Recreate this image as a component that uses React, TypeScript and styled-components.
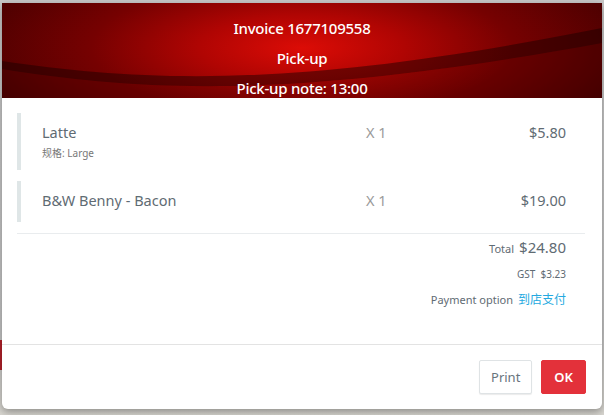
import React from "react";
import styled, { createGlobalStyle } from "styled-components";

const Global = createGlobalStyle`
  html, body { margin: 0; padding: 0; }
  body {
    width: 604px; height: 415px; overflow: hidden;
    background: linear-gradient(180deg, #c9c9c9 0%, #c4c4c4 80%, #d9d7d1 100%);
    font-family: "Noto Sans", "Open Sans", "Noto Sans CJK SC", sans-serif;
  }
`;

const Backdrop = styled.div`
  width: 604px;
  height: 415px;
  padding: 3px 2px 0 2px;
  box-sizing: border-box;
  position: relative;
`;

const SideStrip = styled.div`
  position: absolute;
  left: 0;
  top: 340px;
  width: 2px;
  height: 30px;
  background: #b3202a;
`;

const Modal = styled.div`
  width: 600px;
  height: 406px;
  background: #fff;
  border-radius: 0 0 6px 6px;
  box-shadow: 0 3px 8px rgba(0, 0, 0, 0.35);
  display: flex;
  flex-direction: column;
  overflow: hidden;
  position: relative;
`;

const Header = styled.div`
  position: relative;
  height: 95px;
  display: flex;
  flex-direction: column;
  align-items: center;
  background: radial-gradient(ellipse 340px 110px at 300px 45px, #dc0c06 0%, #b00503 30%, #760101 62%, #4a0000 100%);
  color: #fff;
  overflow: hidden;
`;

const Swoosh = styled.svg`
  position: absolute;
  inset: 0;
  width: 600px;
  height: 95px;
`;

const HeaderLine = styled.div`
  position: relative;
  font-size: 15px;
  font-weight: 500;
  height: 30px;
  line-height: 30px;
  letter-spacing: -0.25px;
  &:first-of-type { margin-top: 10px; }
`;

const Body = styled.div`
  flex: 1;
  padding: 15px 17px 0 15px;
  display: flex;
  flex-direction: column;
`;

const Item = styled.div<{ $h: number }>`
  display: grid;
  grid-template-columns: 1fr 86px 114px;
  align-items: start;
  height: ${(p) => p.$h}px;
  border-left: 4px solid #dfe6e7;
  padding: 9px 19px 0 21px;
  box-sizing: border-box;
  margin-bottom: 11px;
  color: #5f6b73;
`;

const Name = styled.div`
  font-size: 14.5px;
  line-height: 20px;
`;

const Spec = styled.div`
  font-size: 10px;
  color: #777;
  margin-top: 3px;
`;

const Qty = styled.div`
  font-size: 14.5px;
  line-height: 20px;
  color: #9a9a9a;
`;

const Price = styled.div`
  font-size: 14.5px;
  line-height: 20px;
  text-align: right;
`;

const Divider = styled.div`
  height: 1px;
  background: #e9ecee;
`;

const SummaryRow = styled.div<{ $mt: number }>`
  display: flex;
  justify-content: flex-end;
  align-items: baseline;
  gap: 5px;
  padding-right: 19px;
  margin-top: ${(p) => p.$mt}px;
  color: #5f6b73;
`;

const Small = styled.span<{ $size: number }>`
  font-size: ${(p) => p.$size}px;
`;

const Link = styled.span`
  font-size: 12px;
  color: #25a9e0;
  font-family: "Noto Sans CJK SC", sans-serif;
`;

const Footer = styled.div`
  border-top: 1px solid #e3e3e3;
  height: 65px;
  display: flex;
  justify-content: flex-end;
  align-items: flex-start;
  padding: 15px 16px 0 0;
  gap: 9px;
  box-sizing: border-box;
`;

const Button = styled.button<{ $primary?: boolean }>`
  height: 34px;
  padding: 0 ${(p) => (p.$primary ? 12 : 11)}px;
  border-radius: 2px;
  font-family: inherit;
  font-size: 13px;
  cursor: pointer;
  border: 1px solid ${(p) => (p.$primary ? "#e3313a" : "#dfe3e5")};
  background: ${(p) => (p.$primary ? "#e3313a" : "#fff")};
  color: ${(p) => (p.$primary ? "#fff" : "#68747c")};
  font-weight: ${(p) => (p.$primary ? 600 : 400)};
  box-shadow: ${(p) => (p.$primary ? "none" : "0 1px 1px rgba(0,0,0,0.08)")};
`;

export default function App() {
  return (
    <>
      <Global />
      <Backdrop>
        <SideStrip />
        <Modal>
          <Header>
            <Swoosh viewBox="0 0 600 95" preserveAspectRatio="none">
              <path d="M0 58 C 150 80, 300 85, 600 25 L600 40 C 300 95, 150 90, 0 66 Z" fill="rgba(20,0,0,0.45)" />
              <path d="M0 66 C 150 90, 300 95, 600 40 L600 95 L0 95 Z" fill="rgba(40,0,0,0.18)" />
            </Swoosh>
            <HeaderLine>Invoice 1677109558</HeaderLine>
            <HeaderLine>Pick-up</HeaderLine>
            <HeaderLine>Pick-up note: 13:00</HeaderLine>
          </Header>
          <Body>
            <Item $h={57}>
              <div>
                <Name>Latte</Name>
                <Spec>规格: Large</Spec>
              </div>
              <Qty>X 1</Qty>
              <Price>$5.80</Price>
            </Item>
            <Item $h={41}>
              <Name>B&amp;W Benny - Bacon</Name>
              <Qty>X 1</Qty>
              <Price>$19.00</Price>
            </Item>
            <Divider />
            <SummaryRow $mt={3}>
              <Small $size={11}>Total</Small>
              <Small $size={15}>$24.80</Small>
            </SummaryRow>
            <SummaryRow $mt={10}>
              <Small $size={10}>GST</Small>
              <Small $size={10}>$3.23</Small>
            </SummaryRow>
            <SummaryRow $mt={9}>
              <Small $size={11}>Payment option</Small>
              <Link>到店支付</Link>
            </SummaryRow>
          </Body>
          <Footer>
            <Button>Print</Button>
            <Button $primary>OK</Button>
          </Footer>
        </Modal>
      </Backdrop>
    </>
  );
}
